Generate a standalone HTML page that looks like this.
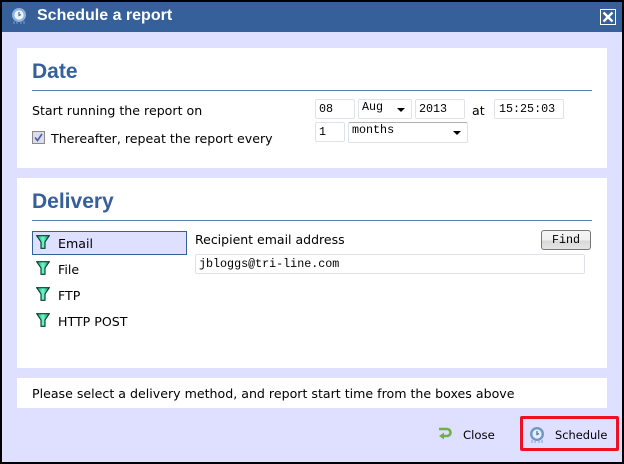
<!DOCTYPE html>
<html>
<head>
<meta charset="utf-8">
<style>
html,body{margin:0;padding:0;width:624px;height:464px;overflow:hidden;background:#000}
*{box-sizing:border-box}
#d{position:absolute;left:2px;top:2px;width:620px;height:460px;background:#dfe0ff}
.a{position:absolute;white-space:nowrap}
.t{font:12.6px/16px "DejaVu Sans",Verdana,sans-serif;color:#000}
.h{font:bold 21px/24px "Liberation Sans",Arial,sans-serif;color:#36609a}
.w{position:absolute;background:#fff;left:17px;width:590px}
.r{position:absolute;left:32px;width:560px;height:1px;background:#5a7fb5}
.i{position:absolute;height:20px;background:#fff;border:1px solid #dfe2e8;border-radius:2px;font:11.7px/18px "Liberation Mono","Courier New",monospace;color:#000;padding-left:3px;white-space:nowrap}
.i.s::after{content:"";position:absolute;right:6px;top:8px;border-left:4px solid transparent;border-right:4px solid transparent;border-top:4px solid #000}
</style>
</head>
<body>
<div id="d"></div>
<div class="a" style="left:2px;top:2px;width:620px;height:30px;background:#36609a"></div>

<svg class="a" style="left:11px;top:7px" width="16" height="18" viewBox="0 0 16 18">
<circle cx="8" cy="8" r="7" fill="#8fb4dc"/><circle cx="8" cy="8" r="4.6" fill="#eef3fa"/>
<path d="M8 5v3.5l2-1" stroke="#4a6a94" stroke-width="1.2" fill="none"/>
<path d="M3 14v3M6 15v2M10 15v2M13 14v3" stroke="#7f9cc4" stroke-width="1"/>
</svg>
<div class="a" style="left:37px;top:6px;font:bold 16px/20px 'Liberation Sans',Arial,sans-serif;color:#fff">Schedule a report</div>
<svg class="a" style="left:600px;top:9px" width="16" height="16" viewBox="0 0 16 16">
<rect x=".5" y=".5" width="15" height="15" fill="none" stroke="#fff"/>
<path d="M3.5 3.5l9 9M12.5 3.5l-9 9" stroke="#fff" stroke-width="2.4"/>
</svg>

<div class="w" style="top:48px;height:120px"></div>
<div class="w" style="top:178px;height:190px"></div>
<div class="w" style="top:378px;height:30px"></div>

<div class="a h" style="left:32px;top:60px">Date</div>
<div class="r" style="top:90px"></div>
<div class="a t" style="left:32px;top:103px;margin-top:0">Start running the report on</div>
<svg class="a" style="left:32px;top:131px" width="13" height="13" viewBox="0 0 13 13">
<rect x=".5" y=".5" width="12" height="12" fill="#dcdcec" stroke="#8a8a8a"/>
<path d="M3 6.5l2.5 3L10 3" stroke="#4a5ea8" stroke-width="1.6" fill="none"/>
</svg>
<div class="a t" style="left:51px;top:131px">Thereafter, repeat the report every</div>

<div class="i" style="left:315px;top:99px;width:40px;line-height:19px">08</div>
<div class="i s" style="left:358px;top:99px;width:54px;line-height:15px">Aug</div>
<div class="i" style="left:415px;top:99px;width:50px;line-height:19px">2013</div>
<div class="a t" style="left:472px;top:103px">at</div>
<div class="i" style="left:494px;top:99px;width:70px;line-height:19px;padding-left:4px">15:25:03</div>
<div class="i" style="left:315px;top:122px;width:30px;line-height:19px">1</div>
<div class="i s" style="left:348px;top:122px;width:120px;height:21px;line-height:15px;border-top-color:#b0b0b0">months</div>

<div class="a h" style="left:32px;top:190px">Delivery</div>
<div class="r" style="top:220px"></div>
<div class="a" style="left:32px;top:231px;width:155px;height:24px;background:#dfe0ff;border:1px solid #36609a"></div>

<svg width="0" height="0" style="position:absolute"><defs>
<linearGradient id="g" x1="0" y1="0" x2="1" y2="0"><stop offset="0" stop-color="#07a070"/><stop offset=".5" stop-color="#70f8c8"/><stop offset="1" stop-color="#089068"/></linearGradient>
<symbol id="f" viewBox="0 0 14 14"><path d="M.7.7h12.6L9 7v6.3H5V7z" fill="url(#g)" stroke="#053a2a" stroke-width="1.1"/></symbol>
</defs></svg>
<svg class="a" style="left:36px;top:235px" width="14" height="14"><use href="#f"/></svg>
<svg class="a" style="left:36px;top:261px" width="14" height="14"><use href="#f"/></svg>
<svg class="a" style="left:36px;top:287px" width="14" height="14"><use href="#f"/></svg>
<svg class="a" style="left:36px;top:313px" width="14" height="14"><use href="#f"/></svg>
<div class="a t" style="left:58px;top:236px">Email</div>
<div class="a t" style="left:58px;top:262px">File</div>
<div class="a t" style="left:58px;top:288px">FTP</div>
<div class="a t" style="left:58px;top:314px">HTTP POST</div>

<div class="a t" style="left:195px;top:232px;font-size:12.5px">Recipient email address</div>
<div class="a" style="left:541px;top:230px;width:50px;height:20px;border:1px solid #777;border-radius:3px;background:linear-gradient(#f4f4f4,#f0f0f0 50%,#d8d8d8 55%,#e4e4e4);font:11.7px/18px 'Liberation Mono',monospace;text-align:center;color:#000">Find</div>
<div class="i" style="left:195px;top:254px;width:390px">jbloggs@tri-line.com</div>

<div class="a t" style="left:32px;top:386px">Please select a delivery method, and report start time from the boxes above</div>

<svg class="a" style="left:437px;top:426px" width="16" height="16" viewBox="0 0 16 16">
<path d="M2 3h8a3.5 3.5 0 0 1 0 7H6" fill="none" stroke="#6fb04a" stroke-width="2.6"/>
<path d="M7 6.5v7L2 10z" fill="#6fb04a"/>
</svg>
<div class="a" style="left:463px;top:427px;font:11.7px/16px 'DejaVu Sans',Verdana,sans-serif;color:#000">Close</div>

<div class="a" style="left:520px;top:416px;width:99px;height:35px;border:3px solid #ee1122;border-radius:2px"></div>
<svg class="a" style="left:529px;top:426px" width="16" height="18" viewBox="0 0 16 18">
<circle cx="8" cy="8" r="7" fill="#6f97c8"/><circle cx="8" cy="8" r="4.6" fill="#e6eef8"/>
<path d="M8 5v3.5l2-1" stroke="#4a6a94" stroke-width="1.2" fill="none"/>
<path d="M3 14v3M6 15v2M10 15v2M13 14v3" stroke="#7f9cc4" stroke-width="1"/>
</svg>
<div class="a" style="left:555px;top:427px;font:11.4px/16px 'DejaVu Sans',Verdana,sans-serif;color:#000">Schedule</div>
</body>
</html>
